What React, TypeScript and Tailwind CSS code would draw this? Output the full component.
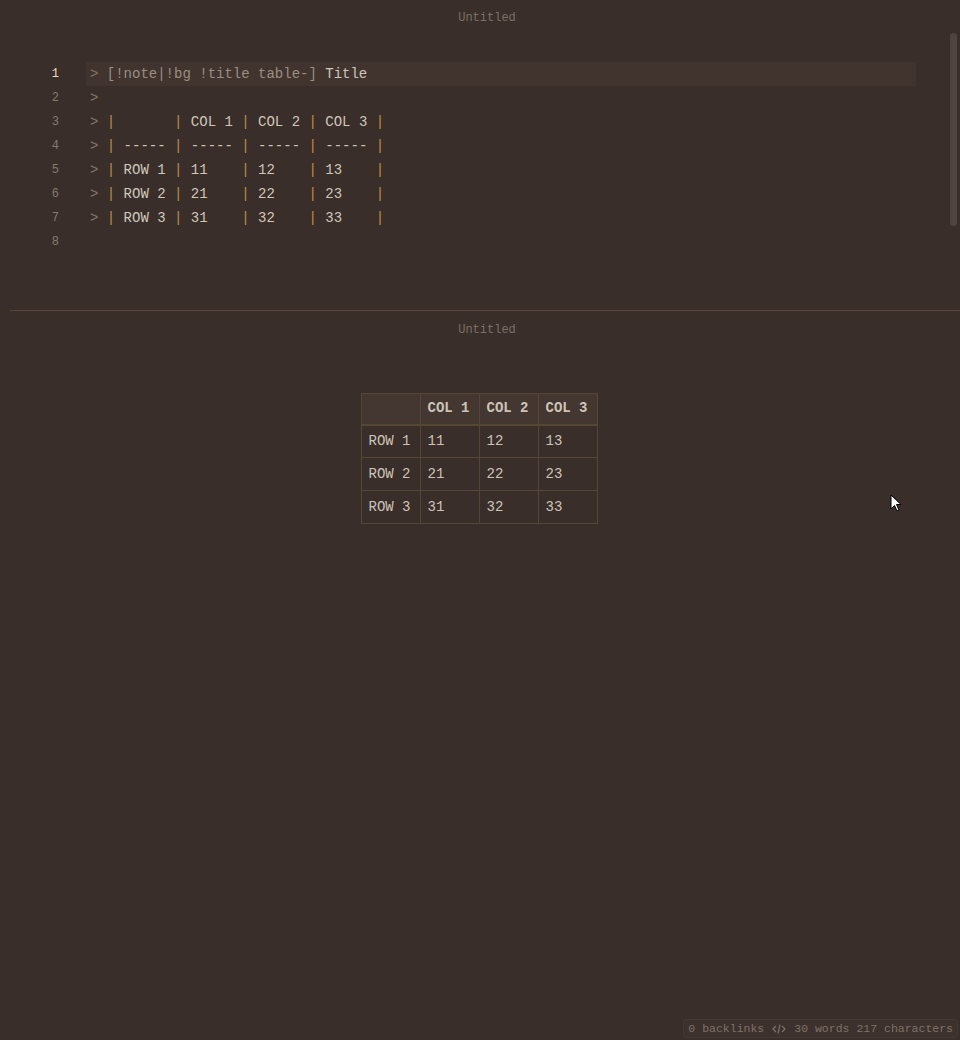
import React from "react";

const mono = { fontFamily: '"Liberation Mono", "DejaVu Sans Mono", monospace' };

type Seg = { t: string; c: string };

const G = "text-[#857566]"; // quote marker
const M = "text-[#9a8e82]"; // callout meta
const T = "text-[#d0c6b9]"; // text
const P = "text-[#bf8c45]"; // pipes

const lines: Seg[][] = [
  [
    { t: "> ", c: G },
    { t: "[!note|!bg !title table-] ", c: M },
    { t: "Title", c: T },
  ],
  [{ t: ">", c: G }],
  [
    { t: "> ", c: G },
    { t: "|", c: P },
    { t: "       ", c: T },
    { t: "|", c: P },
    { t: " COL 1 ", c: T },
    { t: "|", c: P },
    { t: " COL 2 ", c: T },
    { t: "|", c: P },
    { t: " COL 3 ", c: T },
    { t: "|", c: P },
  ],
  [
    { t: "> ", c: G },
    { t: "|", c: P },
    { t: " ----- ", c: T },
    { t: "|", c: P },
    { t: " ----- ", c: T },
    { t: "|", c: P },
    { t: " ----- ", c: T },
    { t: "|", c: P },
    { t: " ----- ", c: T },
    { t: "|", c: P },
  ],
  ...[1, 2, 3].map((r) => [
    { t: "> ", c: G },
    { t: "|", c: P },
    { t: ` ROW ${r} `, c: T },
    { t: "|", c: P },
    { t: ` ${r}1    `, c: T },
    { t: "|", c: P },
    { t: ` ${r}2    `, c: T },
    { t: "|", c: P },
    { t: ` ${r}3    `, c: T },
    { t: "|", c: P },
  ]),
  [],
];

function Editor() {
  return (
    <div className="relative h-[310px]">
      <div className="pt-[11px] text-center text-[12px] leading-[15px] text-[#7b6e65] pl-[14px]" style={mono}>
        Untitled
      </div>
      <div className="mt-[36px] flex flex-col text-[14px]" style={mono}>
        {lines.map((segs, i) => (
          <div key={i} className="flex h-[24px] items-center">
            <div
              className={`w-[59px] shrink-0 text-right text-[12px] ${
                i === 0 ? "text-[#e8dcc2]" : "text-[#86796d]"
              }`}
            >
              {i + 1}
            </div>
            <div
              className={`ml-[27px] flex h-[24px] w-[830px] items-center whitespace-pre pl-[4px] ${
                i === 0 ? "bg-[#41342f]" : ""
              }`}
            >
              {segs.map((s, j) => (
                <span key={j} className={s.c}>
                  {s.t}
                </span>
              ))}
            </div>
          </div>
        ))}
      </div>
      <div className="absolute right-[3px] top-[33px] h-[193px] w-[7px] rounded-full bg-[#4e4440]" />
    </div>
  );
}

function Preview() {
  const rows = [1, 2, 3];
  return (
    <div className="flex flex-col">
      <div className="pt-[12px] text-center text-[12px] leading-[15px] text-[#7b6e65] pl-[14px]" style={mono}>
        Untitled
      </div>
      <div className="mt-[55px] flex justify-center pr-[2px]">
        <table className="border-collapse text-[14px] text-[#cdc4b7]" style={mono}>
          <thead>
            <tr className="bg-[#443631]">
              {["", "COL 1", "COL 2", "COL 3"].map((h, i) => (
                <th
                  key={i}
                  className="h-[31px] w-[59px] border border-[#564636] border-b-2 px-[7px] text-left font-bold"
                >
                  {h}
                </th>
              ))}
            </tr>
          </thead>
          <tbody>
            {rows.map((r) => (
              <tr key={r}>
                <td className="h-[33px] border border-[#564636] px-[7px]">ROW {r}</td>
                <td className="h-[33px] border border-[#564636] px-[7px]">{r}1</td>
                <td className="h-[33px] border border-[#564636] px-[7px]">{r}2</td>
                <td className="h-[33px] border border-[#564636] px-[7px]">{r}3</td>
              </tr>
            ))}
          </tbody>
        </table>
      </div>
    </div>
  );
}

export default function App() {
  return (
    <div className="relative h-[1040px] w-[960px] overflow-hidden bg-[#3a2e2b]">
      <Editor />
      <div className="ml-[10px] h-px bg-[#5a4634]" />
      <Preview />

      <div
        className="absolute bottom-[2px] right-[2px] flex items-center gap-[8px] rounded-[3px] border border-[#45382f] bg-[#3d312d] px-[4px] text-[11.5px] leading-[17px] text-[#7f7268]"
        style={mono}
      >
        <span>0 backlinks</span>
        <svg width="14" height="12" viewBox="0 0 14 12" fill="none" stroke="currentColor" strokeWidth="1.2">
          <path d="M4 3 L1 6 L4 9" />
          <path d="M10 3 L13 6 L10 9" />
          <path d="M8 1.5 L6 10.5" />
        </svg>
        <span>30 words 217 characters</span>
      </div>

      <svg
        className="absolute left-[890px] top-[494px]"
        width="12"
        height="19"
        viewBox="0 0 12 19"
      >
        <path d="M1 1 L1 15 L4.5 11.5 L7 17 L9 16 L6.5 10.5 L11 10.5 Z" fill="#fff" stroke="#000" strokeWidth="1" />
      </svg>
    </div>
  );
}
